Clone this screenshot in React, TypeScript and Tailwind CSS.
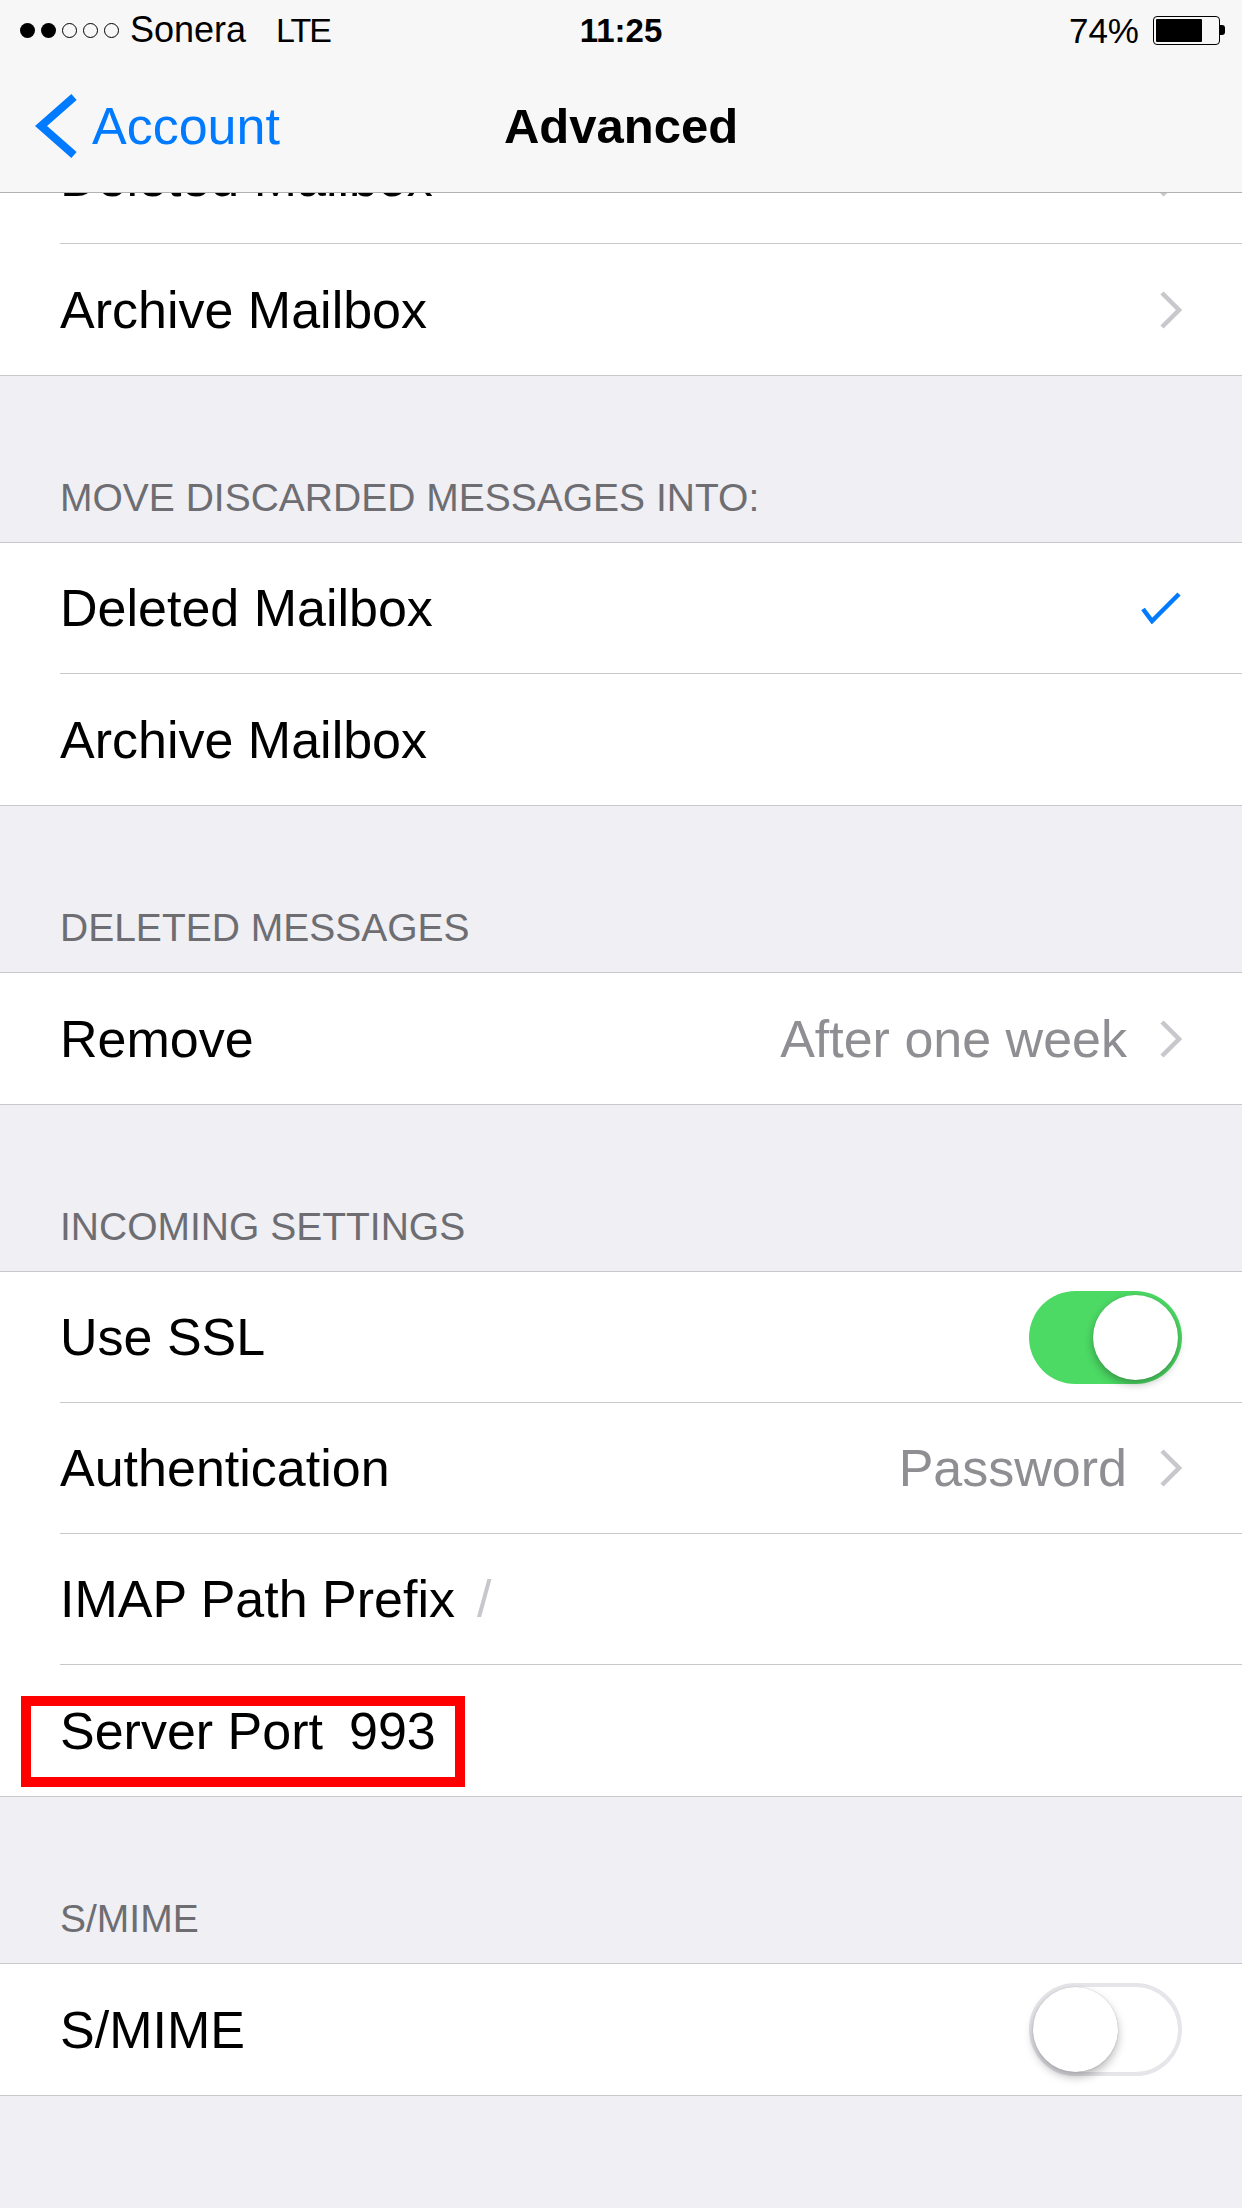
import React from "react";

const Chevron = () => (
  <svg width="23" height="38" viewBox="0 0 23 38" className="shrink-0">
    <polyline points="3,2 20,19 3,36" fill="none" stroke="#c7c7cc" strokeWidth="4.5" />
  </svg>
);

const Check = () => (
  <svg width="42" height="32" viewBox="0 0 42 32" className="shrink-0">
    <polyline points="3,17 12,29 39,2" fill="none" stroke="#007aff" strokeWidth="4.5" />
  </svg>
);

const SwitchOn = () => (
  <div className="w-[153px] h-[93px] rounded-full bg-[#4cd964] flex items-center justify-end pr-[4px] shrink-0">
    <div className="w-[85px] h-[85px] rounded-full bg-white shadow-[0_4px_8px_rgba(0,0,0,0.3),0_0_1px_rgba(0,0,0,0.2)]" />
  </div>
);

const SwitchOff = () => (
  <div className="w-[153px] h-[93px] rounded-full bg-white border-[4px] border-[#e5e5ea] flex items-center shrink-0">
    <div className="w-[85px] h-[85px] rounded-full bg-white shadow-[0_5px_10px_rgba(0,0,0,0.28),0_0_1px_rgba(0,0,0,0.3)]" />
  </div>
);

type RowProps = {
  children: React.ReactNode;
  right?: React.ReactNode;
  last?: boolean;
  extra?: React.ReactNode;
};

const Row = ({ children, right, last, extra }: RowProps) => (
  <div className="relative h-[131px] bg-white pl-[60px]">
    <div
      className={
        last
          ? "h-full flex items-center pr-[60px]"
          : "h-full flex items-center pr-[60px] border-b border-[#c8c7cc]"
      }
    >
      <div className="flex-1 flex items-center text-[52px] leading-none text-black">{children}</div>
      {right}
    </div>
    {extra}
  </div>
);

const Value = ({ text }: { text: string }) => (
  <div className="flex items-center">
    <span className="text-[52px] leading-none text-[#8e8e93] mr-[32px]">{text}</span>
    <Chevron />
  </div>
);

const Header = ({ text }: { text: string }) => (
  <div className="h-[166px] pt-[103px] pl-[60px] text-[39px] leading-[38px] text-[#6d6d72]">{text}</div>
);

const Group = ({ children }: { children: React.ReactNode }) => (
  <div className="border-y border-[#c8c7cc] bg-white">{children}</div>
);

export default function App() {
  return (
    <div className="w-[1242px] h-[2208px] bg-[#efeff4] overflow-hidden font-['Liberation_Sans',Arial,sans-serif]">
      <div className="bg-[#f7f7f7] border-b border-[#b2b2b4]">
        {/* Status bar */}
        <div className="h-[60px] grid grid-cols-3 items-center text-black">
          <div className="flex items-center pl-[20px] min-w-0">
            <div className="flex items-center gap-[6px]">
              <div className="w-[15px] h-[15px] rounded-full bg-black" />
              <div className="w-[15px] h-[15px] rounded-full bg-black" />
              <div className="w-[15px] h-[15px] rounded-full border-[1.5px] border-black" />
              <div className="w-[15px] h-[15px] rounded-full border-[1.5px] border-black" />
              <div className="w-[15px] h-[15px] rounded-full border-[1.5px] border-black" />
            </div>
            <span className="ml-[11px] text-[36px] leading-none">Sonera</span>
            <span className="ml-[30px] text-[34px] leading-none tracking-[-2px]">LTE</span>
          </div>
          <div className="flex justify-center">
            <span className="text-[33px] leading-none font-bold">11:25</span>
          </div>
          <div className="flex items-center justify-end pr-[17px]">
            <span className="text-[35px] leading-none">74%</span>
            <div className="ml-[14px] flex items-center">
              <div className="w-[67px] h-[29px] rounded-[4px] border-[1.5px] border-black p-[2px]">
                <div className="h-full w-[46px] bg-black rounded-[1px]" />
              </div>
              <div className="w-[5px] h-[10px] bg-black rounded-r-[3px]" />
            </div>
          </div>
        </div>
        {/* Nav bar */}
        <div className="h-[132px] grid grid-cols-3 items-center">
          <div className="flex items-center pl-[35px] min-w-0">
            <svg width="44" height="64" viewBox="0 0 44 64" className="shrink-0">
              <polyline points="39,3 6,32 39,61" fill="none" stroke="#007aff" strokeWidth="8" />
            </svg>
            <span className="ml-[13px] text-[52px] leading-none text-[#007aff] whitespace-nowrap">Account</span>
          </div>
          <div className="flex justify-center">
            <span className="text-[49px] leading-none font-bold text-black whitespace-nowrap">Advanced</span>
          </div>
          <div />
        </div>
      </div>

      {/* Partially hidden row */}
      <div className="h-[51px] overflow-hidden bg-white">
        <div className="mt-[-80px]">
          <Row right={<Chevron />}>Deleted Mailbox</Row>
        </div>
      </div>
      <div className="border-b border-[#c8c7cc]">
        <Row right={<Chevron />} last>
          Archive Mailbox
        </Row>
      </div>

      <Header text="MOVE DISCARDED MESSAGES INTO:" />
      <Group>
        <Row right={<Check />}>Deleted Mailbox</Row>
        <Row last>Archive Mailbox</Row>
      </Group>

      <Header text="DELETED MESSAGES" />
      <Group>
        <Row right={<Value text="After one week" />} last>
          Remove
        </Row>
      </Group>

      <Header text="INCOMING SETTINGS" />
      <Group>
        <Row right={<SwitchOn />}>Use SSL</Row>
        <Row right={<Value text="Password" />}>Authentication</Row>
        <Row>
          <span>IMAP Path Prefix</span>
          <span className="ml-[22px] text-[#c7c7cc]">/</span>
        </Row>
        <Row
          last
          extra={
            <div className="absolute left-[21px] top-[31px] w-[444px] h-[91px] border-[10px] border-[#ff0000]" />
          }
        >
          <span>Server Port</span>
          <span className="ml-[26px]">993</span>
        </Row>
      </Group>

      <Header text="S/MIME" />
      <Group>
        <Row right={<SwitchOff />} last>
          S/MIME
        </Row>
      </Group>
    </div>
  );
}
